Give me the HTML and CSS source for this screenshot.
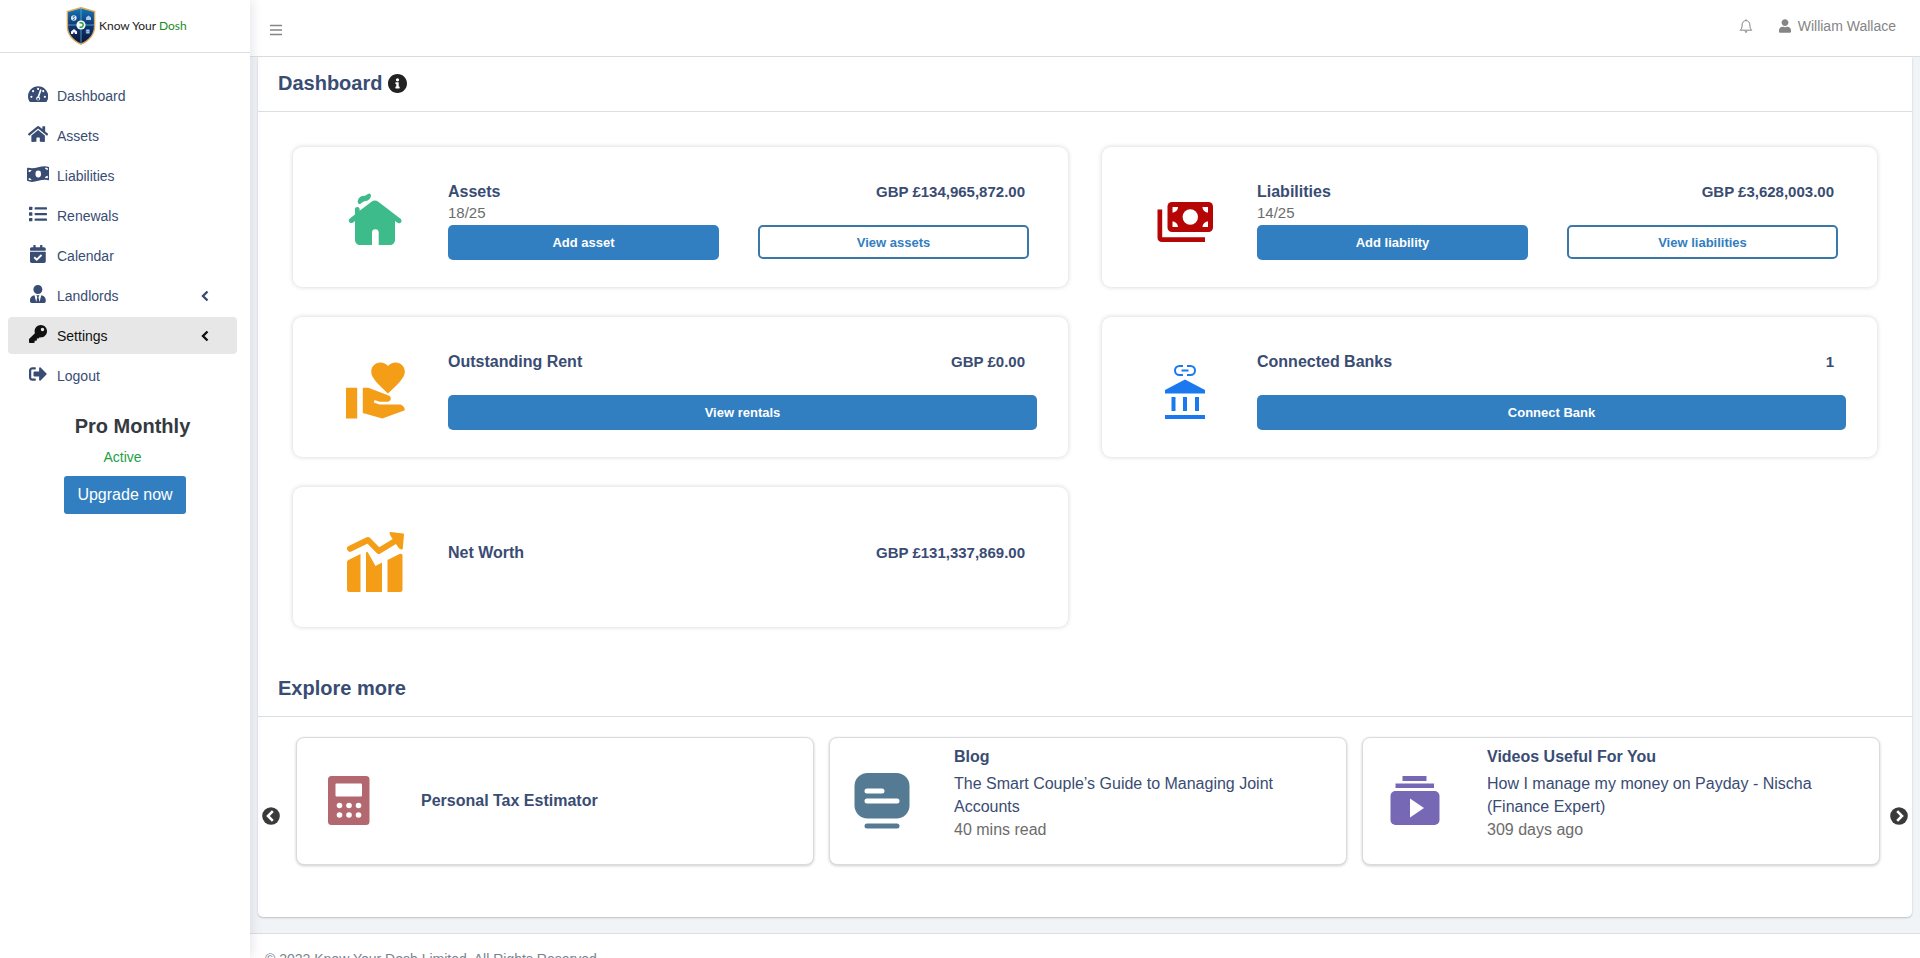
FILE: index.html
```html
<!DOCTYPE html>
<html lang="en">
<head>
<meta charset="utf-8">
<meta name="viewport" content="width=device-width, initial-scale=1">
<title>Know Your Dosh - Dashboard</title>
<link rel="stylesheet" href="styles.css">
</head>
<body>
<div class="shell">
  <aside class="sidebar">
    <a class="brand" href="#">
      <svg class="brand-shield" viewBox="0 0 30 38" aria-hidden="true">
        <defs>
          <linearGradient id="shieldFill" x1="0" y1="0" x2="0" y2="1">
            <stop offset="0" stop-color="#1478b8"/>
            <stop offset=".45" stop-color="#123a74"/>
            <stop offset="1" stop-color="#0a1238"/>
          </linearGradient>
        </defs>
        <path d="M15 .8 28.6 4.5V19c0 8.500-5.500 14.500-13.600 18.200C6.900 33.500 1.400 27.500 1.400 19V4.500z" fill="url(#shieldFill)" stroke="#d9a95c" stroke-width="1.400"/>
        <path d="M15 1.500v35M2 18h26" stroke="#58b4dc" stroke-width=".8"/>
        <circle cx="15" cy="18" r="4.600" fill="#f4fbf8"/>
        <path d="M13.500 15.800h1.500a2.200 2.200 0 0 1 0 4.400h-1.500" fill="none" stroke="#2d9c3c" stroke-width="1.400"/>
        <circle cx="7.800" cy="11" r="2.800" fill="#d9ecfa"/>
        <path d="M8.800 9.500c-2-.8-2 .9-1 1.400s1.200 2-.9 1.500" fill="none" stroke="#174d86" stroke-width=".8"/>
        <path d="M20 12.500v-2l2.500-2 2.500 2v2.500h-4.500z" fill="#a8cdec"/>
        <path d="M5 24.500l3-2.500 3 2.500v2.500H8.800v-1.600H7.200V27H5z" fill="#eef6fc"/>
        <rect x="19.800" y="22.300" width="4" height="4.400" rx=".6" fill="#5c8fce"/>
        <path d="M20.500 23.600h2.600M20.500 25.300h2.600" stroke="#dcebfa" stroke-width=".7"/>
      </svg>
      <span class="brand-name">Know Your <span class="brand-accent">Dosh</span></span>
    </a>
    <nav class="nav" aria-label="Main">
      <a class="nav-item" href="#"><span class="nav-icon"><svg viewBox="0 0 576 512"><path d="M288 32C128.940 32 0 160.940 0 320c0 52.800 14.250 102.260 39.060 144.800 5.610 9.620 16.300 15.200 27.440 15.200h443c11.140 0 21.830-5.580 27.440-15.200C561.750 422.260 576 372.800 576 320c0-159.060-128.940-288-288-288z"/><g fill="#fff"><circle cx="288" cy="112" r="31"/><circle cx="144" cy="176" r="31"/><circle cx="96" cy="336" r="31"/><circle cx="480" cy="336" r="31"/><circle cx="432" cy="176" r="31"/></g><path d="M362 142 290 352" stroke="#fff" stroke-width="46" stroke-linecap="round"/><circle cx="288" cy="384" r="56" fill="#fff"/><circle cx="288" cy="400" r="30"/></svg></span>Dashboard</a>
      <a class="nav-item" href="#"><span class="nav-icon"><svg viewBox="0 0 576 512"><path d="M280.370 148.260L96 300.110V464a16 16 0 0 0 16 16l112.060-.29a16 16 0 0 0 15.920-16V368a16 16 0 0 1 16-16h64a16 16 0 0 1 16 16v95.640a16 16 0 0 0 16 16.050L464 480a16 16 0 0 0 16-16V300L295.670 148.260a12.190 12.190 0 0 0-15.300 0zM571.600 251.470L488 182.560V44.050a12 12 0 0 0-12-12h-56a12 12 0 0 0-12 12v72.610L318.470 43a48 48 0 0 0-61 0L4.340 251.470a12 12 0 0 0-1.600 16.900l25.500 31A12 12 0 0 0 45.150 301l235.220-193.740a12.190 12.190 0 0 1 15.300 0L530.900 301a12 12 0 0 0 16.900-1.600l25.500-31a12 12 0 0 0-1.700-16.930z"/></svg></span>Assets</a>
      <a class="nav-item" href="#"><span class="nav-icon"><svg viewBox="0 0 640 512"><path d="M621.160 54.460C582.370 38.190 543.550 32 504.750 32c-123.170-.01-246.330 62.340-369.500 62.340-30.890 0-61.760-3.920-92.650-13.720-3.470-1.100-6.950-1.620-10.350-1.620C15.040 79 0 92.320 0 110.810v317.260c0 12.630 7.230 24.600 18.840 29.460C57.630 473.810 96.450 480 135.250 480c123.170 0 246.340-62.350 369.510-62.350 30.890 0 61.760 3.920 92.650 13.720 3.470 1.100 6.950 1.620 10.350 1.620 17.210 0 32.250-13.320 32.250-31.810V83.930c-.01-12.640-7.240-24.600-18.850-29.470z"/><g fill="#fff"><ellipse cx="320" cy="256" rx="80" ry="98"/><path d="M48 132c27 6 52 9 81 9-7 35-39 60-81 60zM48 368c45 0 79 29 85 64-31 0-59-4-85-13zM592 380c-29-6-54-10-80-10 4-38 38-65 80-65zM592 144c-43 0-76-26-82-63 30-1 56 4 82 12z"/></g></svg></span>Liabilities</a>
      <a class="nav-item" href="#"><span class="nav-icon"><svg viewBox="0 0 512 512"><rect x="0" y="48" width="96" height="96" rx="16"/><rect x="0" y="208" width="96" height="96" rx="16"/><rect x="0" y="368" width="96" height="96" rx="16"/><rect x="160" y="64" width="352" height="64" rx="16"/><rect x="160" y="224" width="352" height="64" rx="16"/><rect x="160" y="384" width="352" height="64" rx="16"/></svg></span>Renewals</a>
      <a class="nav-item" href="#"><span class="nav-icon"><svg viewBox="0 0 448 512"><path d="M436 160H12c-6.627 0-12-5.373-12-12v-36c0-26.510 21.490-48 48-48h48V12c0-6.627 5.373-12 12-12h40c6.627 0 12 5.373 12 12v52h128V12c0-6.627 5.373-12 12-12h40c6.627 0 12 5.373 12 12v52h48c26.510 0 48 21.490 48 48v36c0 6.627-5.373 12-12 12zM12 192h424c6.627 0 12 5.373 12 12v260c0 26.510-21.490 48-48 48H48c-26.510 0-48-21.490-48-48V204c0-6.627 5.373-12 12-12z"/><path d="M120 348l72 72 136-136" fill="none" stroke="#fff" stroke-width="52"/></svg></span>Calendar</a>
      <a class="nav-item" href="#"><span class="nav-icon"><svg viewBox="0 0 448 512"><path d="M224 256c70.700 0 128-57.300 128-128S294.700 0 224 0 96 57.300 96 128s57.300 128 128 128zm95.800 32.600L272 480l-32-136 32-56h-96l32 56-32 136-47.800-191.400C56.900 292 0 350.300 0 422.400V464c0 26.500 21.500 48 48 48h352c26.500 0 48-21.500 48-48v-41.600c0-72.100-56.900-130.400-128.200-133.800z"/></svg></span>Landlords<svg class="nav-chevron" viewBox="0 0 8 12"><path d="M6.500 1.500 2 6l4.500 4.500" fill="none" stroke="currentColor" stroke-width="2.400"/></svg></a>
      <a class="nav-item nav-item-active" href="#"><span class="nav-icon"><svg viewBox="0 0 512 512"><path d="M512 176.001C512 273.203 433.202 352 336 352c-11.220 0-22.190-1.062-32.827-3.069l-24.012 27.014A23.999 23.999 0 0 1 261.223 384H224v40c0 13.255-10.745 24-24 24h-40v40c0 13.255-10.745 24-24 24H24c-13.255 0-24-10.745-24-24v-78.059c0-6.365 2.529-12.470 7.029-16.971l161.802-161.802C163.108 213.814 160 195.271 160 176 160 78.798 238.797.001 335.999 0 433.488-.001 512 78.511 512 176.001zM336 128c0 26.510 21.490 48 48 48s48-21.490 48-48-21.490-48-48-48-48 21.490-48 48z"/></svg></span>Settings<svg class="nav-chevron" viewBox="0 0 8 12"><path d="M6.500 1.500 2 6l4.500 4.500" fill="none" stroke="currentColor" stroke-width="2.400"/></svg></a>
      <a class="nav-item" href="#"><span class="nav-icon"><svg viewBox="0 0 512 512"><path d="M497 273L329 441c-15 15-41 4.500-41-17v-96H152c-13.300 0-24-10.700-24-24v-96c0-13.300 10.700-24 24-24h136V88c0-21.400 25.900-32 41-17l168 168c9.300 9.400 9.300 24.600 0 34zM192 436v-40c0-6.600-5.400-12-12-12H96c-17.700 0-32-14.300-32-32V160c0-17.700 14.300-32 32-32h84c6.600 0 12-5.400 12-12V76c0-6.600-5.400-12-12-12H96c-53 0-96 43-96 96v192c0 53 43 96 96 96h84c6.600 0 12-5.400 12-12z"/></svg></span>Logout</a>
    </nav>
    <section class="plan">
      <h2 class="plan-name">Pro Monthly</h2>
      <p class="plan-status">Active</p>
      <button class="plan-button" type="button">Upgrade now</button>
    </section>
  </aside>

  <div class="page">
    <header class="topbar">
      <button class="icon-button" type="button" aria-label="Toggle menu">
        <svg width="12" height="12" viewBox="0 0 12 12"><path d="M0 1.500h12M0 6h12M0 10.500h12" stroke="currentColor" stroke-width="1.400"/></svg>
      </button>
      <div class="topbar-tools">
        <button class="icon-button" type="button" aria-label="Notifications">
          <svg width="14" height="14" viewBox="0 0 14 14" fill="none" stroke="currentColor"><path d="M7 .3v1.200M1.200 11.200h11.600c-1.500-1.300-1.900-2.400-1.900-5.200C10.900 3.300 9.200 1.600 7 1.600S3.100 3.300 3.100 6c0 2.800-.4 3.900-1.900 5.200z" stroke-linejoin="round"/><path d="M5.600 12.300a1.400 1.400 0 0 0 2.800 0z" fill="currentColor" stroke="none"/></svg>
        </button>
        <a class="user" href="#">
          <svg width="12" height="14" viewBox="0 0 448 512" fill="currentColor"><path d="M224 256c70.700 0 128-57.300 128-128S294.700 0 224 0 96 57.300 96 128s57.300 128 128 128zm89.600 32h-16.700c-22.200 10.200-46.900 16-72.900 16s-50.600-5.800-72.900-16h-16.700C60.200 288 0 348.200 0 422.400V464c0 26.500 21.500 48 48 48h352c26.500 0 48-21.500 48-48v-41.600c0-74.200-60.200-134.400-134.400-134.400z"/></svg>
          William Wallace
        </a>
      </div>
    </header>

    <main class="panel">
      <div class="panel-heading">
        <h1 class="panel-title">Dashboard</h1>
        <svg class="info" viewBox="8 8 496 496" role="img" aria-label="Information"><path d="M256 8C119.043 8 8 119.083 8 256c0 136.997 111.043 248 248 248s248-111.003 248-248C504 119.083 392.957 8 256 8zm0 110c23.196 0 42 18.804 42 42s-18.804 42-42 42-42-18.804-42-42 18.804-42 42-42zm56 254c0 6.627-5.373 12-12 12h-88c-6.627 0-12-5.373-12-12v-24c0-6.627 5.373-12 12-12h12v-64h-12c-6.627 0-12-5.373-12-12v-24c0-6.627 5.373-12 12-12h64c6.627 0 12 5.373 12 12v100h12c6.627 0 12 5.373 12 12v24z"/></svg>
      </div>

      <div class="stats">
        <section class="stat">
          <svg class="stat-icon" viewBox="0 0 70 70" fill="#3dbb8a">
            <path d="M18.500 19c1-4 4-4.500 6-4.500 2.500 0 2.500-1.500 4-2 2-.8 2 1.500 1.200 3-1.200 2.500-3.500 3-5.500 3-2 .2-2.700 2-4 2.600-1.400.5-2-.8-1.700-2.100z" stroke="#3dbb8a" stroke-width="1.500"/>
            <path d="M31.500 19.700c2-1.600 4.800-1.600 6.800 0L60.500 36.700c1.500 1.300 1.300 3.100.1 4-1 .8-2.400.7-3.500-.1L55 39v18.500c0 3.500-2 5.500-5.500 5.500H38.700V50.500a3 3 0 0 0-6.700 0V63H20.500c-3.500 0-5.500-2-5.500-5.500V39l-1.500 1.300c-1.300 1-2.700 1-3.800.1-1.200-1-1.200-2.600.1-3.800l5.200-4v-5.400c0-3 4.600-3 4.600 0v1.600z"/>
          </svg>
          <div class="stat-body">
            <div class="stat-head"><h2 class="stat-title">Assets</h2><span class="stat-amount">GBP £134,965,872.00</span></div>
            <div class="stat-sub">18/25</div>
            <div class="stat-actions"><button class="button" type="button">Add asset</button><button class="button button-outline" type="button">View assets</button></div>
          </div>
        </section>
        <section class="stat">
          <svg class="stat-icon" viewBox="0 0 70 70">
            <path d="M8.500 27.500h4.700v27.800H56V60H13c-2.800 0-4.500-1.700-4.500-4.500z" fill="#b60505"/>
            <rect x="18.500" y="20" width="45.500" height="30" rx="4.500" fill="#b60505"/>
            <circle cx="41.300" cy="35" r="7.700" fill="#fff"/>
            <path d="M23.500 25h5.500c0 3-2.500 5.500-5.500 5.500zM59 25v5.500c-3 0-5.500-2.500-5.500-5.500zM23.500 45v-5.500c3 0 5.500 2.500 5.500 5.500zM59 45h-5.500c0-3 2.500-5.500 5.500-5.500z" fill="#fff"/>
          </svg>
          <div class="stat-body">
            <div class="stat-head"><h2 class="stat-title">Liabilities</h2><span class="stat-amount">GBP £3,628,003.00</span></div>
            <div class="stat-sub">14/25</div>
            <div class="stat-actions"><button class="button" type="button">Add liability</button><button class="button button-outline" type="button">View liabilities</button></div>
          </div>
        </section>
        <section class="stat">
          <svg class="stat-icon" viewBox="0 0 70 70" fill="#f49d16">
            <path transform="translate(3.200 5) scale(2.800)" d="M1 11h4v11H1zm15-7.750C16.650 2.490 17.660 2 18.700 2 20.550 2 22 3.450 22 5.300c0 2.270-2.910 4.900-6 7.700-3.090-2.810-6-5.440-6-7.700C10 3.450 11.450 2 13.300 2c1.040 0 2.050.49 2.700 1.250zM20 17h-7l-2.090-.73.33-.94L13 16h2.820c.65 0 1.180-.53 1.180-1.180 0-.49-.31-.93-.77-1.110L8.970 11H7v9.020L14 22l8.010-3c-.01-1.100-.9-2-2.010-2z"/>
          </svg>
          <div class="stat-body">
            <div class="stat-head"><h2 class="stat-title">Outstanding Rent</h2><span class="stat-amount">GBP £0.00</span></div>
            <div class="stat-sub"></div>
            <button class="button" type="button">View rentals</button>
          </div>
        </section>
        <section class="stat">
          <svg class="stat-icon" viewBox="0 0 70 70" fill="#1b78ee">
            <path d="M34 14h-3.500a4.500 4.500 0 0 0 0 9H34M38 14h3.500a4.500 4.500 0 0 1 0 9H38M32.500 18.500h7" fill="none" stroke="#1b78ee" stroke-width="2"/>
            <path d="M36 27.500 56 38v3.500H16V38zM22.500 45h4v14h-4zM34 45h4v14h-4zM46 45h4v14h-4zM16 63h40v4H16z"/>
          </svg>
          <div class="stat-body">
            <div class="stat-head"><h2 class="stat-title">Connected Banks</h2><span class="stat-amount">1</span></div>
            <div class="stat-sub"></div>
            <button class="button" type="button">Connect Bank</button>
          </div>
        </section>
        <section class="stat">
          <svg class="stat-icon" viewBox="0 0 70 70" fill="#f49d16">
            <path d="M10 26.800 28 18 38.800 29 56 18.500" fill="none" stroke="#f49d16" stroke-width="6" stroke-linecap="round" stroke-linejoin="round"/>
            <path d="M50.500 11 63 12.500 61.800 26.500 59.500 25.500 51.500 13.500z" stroke="#f49d16" stroke-width="2" stroke-linejoin="round"/>
            <path d="M7 40.500q0-1.500 1.400-2.400L20.500 32v38H9.500Q7 70 7 67.500zM26 30.500l1.500-.8L35.500 44l6.500-3.500V70H26zM47.500 38 60 31.800q2.500-.5 2.500 1.700v34q0 2.500-2.500 2.500H47.500z"/>
          </svg>
          <div class="stat-body stat-body-middle">
            <div class="stat-head"><h2 class="stat-title">Net Worth</h2><span class="stat-amount">GBP £131,337,869.00</span></div>
          </div>
        </section>
      </div>

      <div class="panel-heading">
        <h2 class="panel-title">Explore more</h2>
      </div>

      <div class="carousel">
        <button class="carousel-arrow" type="button" aria-label="Previous">
          <svg width="18" height="18" viewBox="0 0 18 18"><circle cx="9" cy="9" r="8.800" fill="#3a3a3a"/><path d="M10.800 4.200 6 9l4.800 4.800" fill="none" stroke="#fff" stroke-width="2.600"/></svg>
        </button>
        <div class="carousel-track">
          <article class="tile">
            <svg class="tile-icon" viewBox="0 0 60 60">
              <rect x="9" y="6" width="41.500" height="49" rx="3.500" fill="#b3686f"/>
              <rect x="16.500" y="13.500" width="26.500" height="13" rx="1" fill="#fff"/>
              <g fill="#fff"><circle cx="20.500" cy="35.500" r="2.800"/><circle cx="30" cy="35.500" r="2.800"/><circle cx="39.500" cy="35.500" r="2.800"/><circle cx="20.500" cy="45" r="2.800"/><circle cx="30" cy="45" r="2.800"/><circle cx="39.500" cy="45" r="2.800"/></g>
            </svg>
            <div class="tile-body tile-body-middle"><h3 class="tile-title">Personal Tax Estimator</h3></div>
          </article>
          <article class="tile">
            <svg class="tile-icon" viewBox="0 0 60 60">
              <rect x="2.500" y="3" width="55" height="45.500" rx="13" fill="#557b94"/>
              <path d="M15 21h15M15 31h30" stroke="#fff" stroke-width="5" stroke-linecap="round"/>
              <path d="M15 56h30" stroke="#557b94" stroke-width="5" stroke-linecap="round"/>
            </svg>
            <div class="tile-body">
              <h3 class="tile-title">Blog</h3>
              <a class="tile-link" href="#">The Smart Couple’s Guide to Managing Joint Accounts</a>
              <p class="tile-meta">40 mins read</p>
            </div>
          </article>
          <article class="tile">
            <svg class="tile-icon" viewBox="0 0 60 60">
              <path d="M17.500 6h24v5h-24zM10.500 13.500H49v4.500H10.500z" fill="#7668b5"/>
              <rect x="5.500" y="21" width="49" height="34" rx="5" fill="#7668b5"/>
              <path d="M25 28.500v19L39 38z" fill="#fff"/>
            </svg>
            <div class="tile-body">
              <h3 class="tile-title">Videos Useful For You</h3>
              <a class="tile-link" href="#">How I manage my money on Payday - Nischa (Finance Expert)</a>
              <p class="tile-meta">309 days ago</p>
            </div>
          </article>
        </div>
        <button class="carousel-arrow" type="button" aria-label="Next">
          <svg width="18" height="18" viewBox="0 0 18 18"><circle cx="9" cy="9" r="8.800" fill="#3a3a3a"/><path d="M7.200 4.200 12 9l-4.800 4.800" fill="none" stroke="#fff" stroke-width="2.600"/></svg>
        </button>
      </div>
    </main>

    <footer class="footer">© 2022 Know Your Dosh Limited. All Rights Reserved.</footer>
  </div>
</div>
</body>
</html>
```

FILE: styles.css
```css
:root {
  --navy: #394c73;
  --blue: #317ec0;
  --line: #dcdfe1;
  --muted: #6c6c6c;
}

* {
  box-sizing: border-box;
}

body {
  margin: 0;
  background: #f1f4f7;
  color: var(--navy);
  font-family: "Liberation Sans", Arial, sans-serif;
  font-size: 16px;
}

h1, h2, h3, p {
  margin: 0;
}

a {
  color: inherit;
  text-decoration: none;
}

button {
  font: inherit;
  cursor: pointer;
}

.shell {
  display: flex;
  height: 100vh;
  overflow: hidden;
}

/* Sidebar */

.sidebar {
  position: relative;
  z-index: 1;
  flex: 0 0 250px;
  background: #fff;
  box-shadow: 1px 0 12px rgba(20, 20, 60, 0.12);
}

.brand {
  display: flex;
  align-items: center;
  gap: 3px;
  height: 53px;
  padding: 2px 0 2px 66px;
  border-bottom: 1px solid var(--line);
}

.brand-shield {
  width: 30px;
  height: 38px;
}

.brand-name {
  padding-bottom: 2px;
  color: #222;
  font-family: Lato, "Liberation Sans", sans-serif;
  font-size: 12px;
  white-space: nowrap;
}

.brand-accent {
  color: #218a21;
}

.nav {
  display: flex;
  flex-direction: column;
  gap: 3px;
  padding: 24px 13px 0 8px;
}

.nav-item {
  display: flex;
  align-items: center;
  height: 37px;
  padding: 0 28px 0 18px;
  border-radius: 4px;
  font-size: 14px;
}

.nav-item-active {
  background: #e7e7e7;
  color: #111;
}

.nav-icon {
  display: flex;
  justify-content: center;
  width: 24px;
  margin-right: 7px;
  padding-bottom: 4px;
}

.nav-icon svg {
  height: 18px;
  fill: currentColor;
}

.nav-chevron {
  width: 8px;
  height: 12px;
  margin-left: auto;
}

.plan {
  display: flex;
  flex-direction: column;
  align-items: center;
  padding-top: 20px;
}

.plan-name {
  padding-left: 15px;
  color: #343a40;
  font-size: 20px;
  line-height: 24px;
}

.plan-status {
  padding: 8px 5px 8px 0;
  color: #23a047;
  font-size: 14px;
  line-height: 22px;
}

.plan-button {
  height: 38px;
  padding: 0 13px;
  border: 0;
  border-radius: 3px;
  background: var(--blue);
  color: #fff;
}

/* Top bar */

.page {
  display: flex;
  flex: 1;
  flex-direction: column;
  min-width: 0;
}

.topbar {
  display: flex;
  flex: none;
  align-items: center;
  justify-content: space-between;
  height: 57px;
  padding: 0 24px 0 20px;
  border-bottom: 1px solid var(--line);
  background: #fff;
  color: #858585;
}

.topbar-tools {
  display: flex;
  align-items: center;
  gap: 26px;
  padding-bottom: 4px;
}

.icon-button {
  display: flex;
  padding: 0;
  border: 0;
  background: none;
  color: inherit;
}

.topbar > .icon-button {
  padding-top: 3px;
}

.user {
  display: flex;
  align-items: center;
  gap: 7px;
  font-size: 14px;
}

/* Main panel */

.panel {
  flex: none;
  margin: 0 8px 16px;
  padding-bottom: 22px;
  border-radius: 0 0 5px 5px;
  background: #fff;
  box-shadow: 0 1px 2px rgba(0, 0, 0, 0.22);
}

.panel-heading {
  display: flex;
  align-items: center;
  gap: 6px;
  height: 55px;
  padding: 0 20px 2px;
  border-bottom: 1px solid var(--line);
}

.panel-title {
  font-size: 20px;
  line-height: 24px;
}

.info {
  width: 19px;
  height: 19px;
  fill: #222;
}

.stats {
  display: grid;
  grid-template-columns: repeat(2, minmax(0, 1fr));
  gap: 30px 34px;
  padding: 35px;
}

.stat {
  display: grid;
  grid-template-columns: 155px minmax(0, 1fr);
  align-items: center;
  min-height: 140px;
  padding-right: 31px;
  border-radius: 9px;
  background: #fff;
  box-shadow: 0 0 5px rgba(0, 0, 0, 0.18);
}

.stat-icon {
  width: 70px;
  height: 70px;
  margin-left: 47px;
}

.stat-body {
  display: flex;
  flex-direction: column;
  padding-top: 6px;
}

.stat-body-middle {
  padding: 0 0 8px;
}

.stat-head {
  display: flex;
  align-items: center;
  justify-content: space-between;
  padding-right: 12px;
  line-height: 24px;
}

.stat-title {
  font-size: 16px;
}

.stat-amount {
  font-size: 15px;
  font-weight: 700;
}

.stat-sub {
  height: 21px;
  color: var(--muted);
  font-size: 15px;
  line-height: 18px;
}

.stat-actions {
  display: grid;
  grid-template-columns: 1fr 1fr;
  align-items: start;
  gap: 39px;
  padding-right: 8px;
}

.button {
  height: 35px;
  padding: 0 12px;
  border: 0;
  border-radius: 5px;
  background: var(--blue);
  color: #fff;
  font-size: 13px;
  font-weight: 700;
}

.button-outline {
  height: 34px;
  border: 2px solid #3b78aa;
  background: #fff;
  color: var(--blue);
}

/* Explore carousel */

.carousel {
  display: grid;
  grid-template-columns: 38px minmax(0, 1fr) 32px;
  align-items: center;
  padding-top: 20px;
}

.carousel-arrow {
  display: flex;
  padding: 0 4px;
  border: 0;
  background: none;
}

.carousel-arrow:last-child {
  justify-content: flex-end;
}

.carousel-track {
  display: grid;
  grid-template-columns: repeat(3, minmax(0, 1fr));
  gap: 15px;
  padding-bottom: 30px;
}

.tile {
  display: grid;
  grid-template-columns: 124px minmax(0, 1fr);
  align-items: center;
  min-height: 128px;
  padding: 0 48px 2px 0;
  border: 1px solid #d9dbdc;
  border-radius: 8px;
  background: #fff;
  box-shadow: 0 1px 3px rgba(0, 0, 0, 0.2);
}

.tile-icon {
  width: 60px;
  height: 60px;
  margin-left: 22px;
}

.tile-body {
  align-self: start;
  padding-top: 7px;
  line-height: 23px;
}

.tile-body-middle {
  align-self: center;
  padding: 0;
}

.tile-title {
  font-size: 16px;
}

.tile-link {
  display: block;
  padding-top: 4px;
}

.tile-meta {
  color: var(--muted);
}

/* Footer */

.footer {
  flex: none;
  padding: 15px;
  border-top: 1px solid var(--line);
  background: #fff;
  color: #76838f;
  font-size: 14px;
  line-height: 21px;
}
```
